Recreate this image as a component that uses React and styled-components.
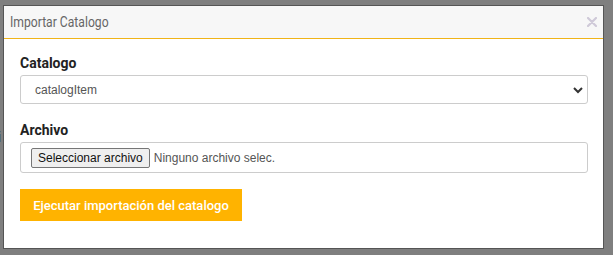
import styled, { createGlobalStyle } from "styled-components"

const Global = createGlobalStyle`
  html, body {
    margin: 0;
    padding: 0;
    background: #7f7f7f;
  }
  body {
    font-family: Roboto, "Liberation Sans", Arial, sans-serif;
  }
`

export default function App() {
    return (
        <>
            <Global />
            <Backdrop>
                <Behind>i</Behind>
                <Modal>
                    <Header>
                        <Title>Importar Catalogo</Title>
                        <Close aria-label="Cerrar">
                            <svg width="10" height="10" viewBox="0 0 10 10">
                                <path d="M1 1 L9 9 M9 1 L1 9" stroke="#cfc9d8" strokeWidth="2.2" strokeLinecap="round" />
                            </svg>
                        </Close>
                    </Header>
                    <Body>
                        <Field $gap={18}>
                            <Label>Catalogo</Label>
                            <SelectBox>
                                <span>catalogItem</span>
                                <svg width="12" height="8" viewBox="0 0 12 8">
                                    <path d="M2 2 L6 6 L10 2" fill="none" stroke="#333" strokeWidth="2" />
                                </svg>
                            </SelectBox>
                        </Field>
                        <Field $gap={16}>
                            <Label>Archivo</Label>
                            <FileBox>
                                <FileButton>Seleccionar archivo</FileButton>
                                <FileName>Ninguno archivo selec.</FileName>
                            </FileBox>
                        </Field>
                        <Submit>Ejecutar importación del catalogo</Submit>
                    </Body>
                </Modal>
            </Backdrop>
        </>
    )
}

const Backdrop = styled.div`
  position: relative;
  width: 613px;
  height: 255px;
  padding: 5px 0 0 3px;
  box-sizing: border-box;
`

const Behind = styled.span`
  position: absolute;
  left: -2px;
  top: 129px;
  font-family: "Liberation Sans", Arial, sans-serif;
  font-size: 14px;
  color: #333;
`

const Modal = styled.div`
  position: relative;
  width: 601px;
  height: 244px;
  background: #fff;
  border: 1px solid #555;
  box-sizing: border-box;
  display: flex;
  flex-direction: column;
`

const Header = styled.div`
  height: 32px;
  background: #f7f7f7;
  border-bottom: 1px solid #f0b418;
  display: flex;
  align-items: center;
  justify-content: space-between;
  padding: 0 6px 0 6px;
`

const Title = styled.h4`
  margin: 0;
  font-family: Roboto, sans-serif;
  font-weight: 400;
  font-size: 15px;
  color: #666;
  transform: scaleX(0.81);
  transform-origin: left center;
`

const Close = styled.button`
  border: 0;
  background: none;
  padding: 0;
  display: flex;
  cursor: pointer;
`

const Body = styled.div`
  padding: 16px 15px 0 16px;
  display: flex;
  flex-direction: column;
`

const Field = styled.div`
  display: flex;
  flex-direction: column;
  margin-bottom: ${p => p.$gap}px;
`

const Label = styled.label`
  font-family: Roboto, sans-serif;
  font-weight: 700;
  font-size: 14px;
  color: #222;
  line-height: 16px;
  margin-bottom: 4px;
`

const SelectBox = styled.div`
  height: 29px;
  border: 1px solid #ccc;
  border-radius: 3px;
  box-sizing: border-box;
  display: flex;
  align-items: center;
  justify-content: space-between;
  padding: 0 3px 0 14px;
  font-family: "Liberation Sans", Arial, sans-serif;
  font-size: 12px;
  color: #555;
`

const FileBox = styled.div`
  height: 31px;
  border: 1px solid #ccc;
  border-radius: 3px;
  box-sizing: border-box;
  display: flex;
  align-items: center;
  padding: 0 10px;
  gap: 4px;
  font-family: "Liberation Sans", Arial, sans-serif;
  font-size: 12px;
`

const FileButton = styled.span`
  height: 18px;
  display: flex;
  align-items: center;
  padding: 0 6px;
  background: #efefef;
  border: 1px solid #767676;
  border-radius: 2px;
  color: #111;
`

const FileName = styled.span`
  color: #555;
`

const Submit = styled.button`
  align-self: flex-start;
  height: 32px;
  width: 222px;
  padding: 0;
  border: 0;
  background: #ffb300;
  color: #fff;
  font-family: Roboto, sans-serif;
  font-size: 13px;
  font-weight: 500;
  white-space: nowrap;
  cursor: pointer;
`
